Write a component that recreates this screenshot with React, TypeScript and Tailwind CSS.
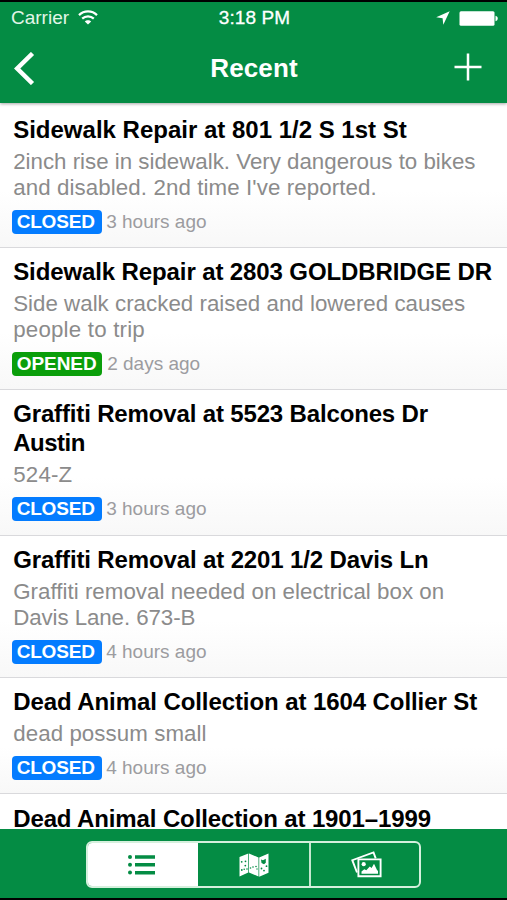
import React from "react";

type Line = { text: string; spacing: string };
type Report = {
  title: Line[];
  body: Line[];
  status: "CLOSED" | "OPENED";
  age: string;
};

const reports: Report[] = [
  {
    title: [{ text: "Sidewalk Repair at 801 1/2 S 1st St", spacing: "tracking-[0px]" }],
    body: [
      { text: "2inch rise in sidewalk. Very dangerous to bikes", spacing: "tracking-[0px]" },
      { text: "and disabled. 2nd time I've reported.", spacing: "tracking-[0.1px]" },
    ],
    status: "CLOSED",
    age: "3 hours ago",
  },
  {
    title: [{ text: "Sidewalk Repair at 2803 GOLDBRIDGE DR", spacing: "tracking-[-0.11px]" }],
    body: [
      { text: "Side walk cracked raised and lowered causes", spacing: "tracking-[0.02px]" },
      { text: "people to trip", spacing: "tracking-[0.2px]" },
    ],
    status: "OPENED",
    age: "2 days ago",
  },
  {
    title: [
      { text: "Graffiti Removal at 5523 Balcones Dr", spacing: "tracking-[-0.15px]" },
      { text: "Austin", spacing: "tracking-[-0.5px]" },
    ],
    body: [{ text: "524-Z", spacing: "tracking-[0.2px]" }],
    status: "CLOSED",
    age: "3 hours ago",
  },
  {
    title: [{ text: "Graffiti Removal at 2201 1/2 Davis Ln", spacing: "tracking-[-0.13px]" }],
    body: [
      { text: "Graffiti removal needed on electrical box on", spacing: "tracking-[0.03px]" },
      { text: "Davis Lane. 673-B", spacing: "tracking-[-0.08px]" },
    ],
    status: "CLOSED",
    age: "4 hours ago",
  },
  {
    title: [{ text: "Dead Animal Collection at 1604 Collier St", spacing: "tracking-[-0.08px]" }],
    body: [{ text: "dead possum small", spacing: "tracking-[0.08px]" }],
    status: "CLOSED",
    age: "4 hours ago",
  },
];

function Row({ report }: { report: Report }) {
  return (
    <li className="shrink-0 whitespace-nowrap border-b border-[#d9d9dc] bg-linear-to-b from-white from-60% to-[#f8f8f8] pt-[9px] pr-2 pb-[13.2px] pl-[13.2px]">
      <h2 className="text-[24px] leading-[29px] font-bold text-black">
        {report.title.map((line) => (
          <span key={line.text} className={`block ${line.spacing}`}>{line.text}</span>
        ))}
      </h2>
      <p className="mt-[5px] text-[22.3px] leading-[26px] text-[#8b8b8b]">
        {report.body.map((line) => (
          <span key={line.text} className={`block ${line.spacing}`}>{line.text}</span>
        ))}
      </p>
      <div className="mt-[9px] -ml-px flex h-6 items-center">
        <span
          className={`flex h-6 w-[90px] items-center rounded-[4px] pl-[4.5px] text-[19px] leading-6 font-bold text-white ${
            report.status === "CLOSED" ? "bg-[#047cff] tracking-[-0.2px]" : "bg-[#0a9e0a] tracking-[-0.05px]"
          }`}
        >
          {report.status}
        </span>
        <span
          className={`text-[19px] leading-6 text-[#9c9ca0] ${report.status === "CLOSED" ? "ml-1" : "ml-[5px]"}`}
        >
          {report.age}
        </span>
      </div>
    </li>
  );
}

function WifiIcon() {
  return (
    <svg className="mb-0.5 ml-[9px] h-[15px] w-5" viewBox="0 0 20 15" fill="none" stroke="white" strokeWidth="2.2">
      <path d="M1 5.1C6 .1 14 .1 19 5.1" />
      <path d="M4.2 8.6c3.3-3.1 8.3-3.1 11.6 0" />
      <path d="M10 14.5 6.8 11.6c1.6-1.9 4.8-1.9 6.4 0Z" fill="white" stroke="none" />
    </svg>
  );
}

function ListIcon() {
  return (
    <svg className="mr-[3px] h-5 w-7" viewBox="0 0 28 20" fill="#048c44">
      <circle cx="2" cy="2" r="2" />
      <circle cx="2" cy="9.8" r="2" />
      <circle cx="2" cy="17.6" r="2" />
      <path d="M7 .3h20v3.5H7zM7 8.1h20v3.5H7zM7 15.9h20v3.5H7z" />
    </svg>
  );
}

function MapIcon() {
  return (
    <svg className="h-6 w-[30px]" viewBox="0 0 30 24">
      <path d="M.5 4 9.3.5v19L.5 23.5zM10 .5l9.5 4v19l-9.5-4zM20.2 4.5l9.3-4v19.2l-9.3 4z" fill="white" />
      <g fill="#048c44">
        <circle cx="2.7" cy="8.8" r=".9" />
        <circle cx="6.5" cy="8.3" r=".9" />
        <circle cx="6.3" cy="12.6" r=".9" />
        <circle cx="2.8" cy="17" r=".9" />
        <circle cx="5.2" cy="16.3" r=".8" />
        <circle cx="8" cy="16" r=".8" />
        <circle cx="11.5" cy="15" r=".8" />
        <circle cx="14" cy="14" r=".8" />
        <circle cx="17" cy="13.5" r=".8" />
        <circle cx="18" cy="16" r=".7" />
        <circle cx="22.5" cy="15.5" r=".9" />
        <circle cx="25" cy="17.6" r=".9" />
        <circle cx="27.5" cy="13.2" r=".9" />
        <path d="m22 6.4 2 .8 2.8-1.5v4L25 11.2 22.5 10z" />
      </g>
    </svg>
  );
}

function PhotosIcon() {
  return (
    <svg className="ml-[3px] h-[27px] w-[31px]" viewBox="0 0 31 27" fill="none" stroke="white" strokeWidth="1.9">
      <path d="M6 21.5 1.3 9.2 22.5 1.4l2.2 6" />
      <path d="M7.4 8.4h22.2v16.8H7.4z" fill="#048c44" />
      <path d="M10.5 22.8v-2.4l2.8-2.2 2 1 3.5-3.6 1.8 1.4 2.4-4.2 3 6.3 1 .8v2.9z" fill="white" stroke="none" />
      <circle cx="12.7" cy="13.2" r="2.1" fill="white" stroke="none" />
    </svg>
  );
}

export default function App() {
  return (
    <div className="flex h-[900px] w-[507px] flex-col overflow-hidden border-t-2 border-b-2 border-black bg-white font-['Liberation_Sans',Arial,sans-serif]">
      <header className="z-10 h-[101px] shrink-0 bg-[#048c44] text-white shadow-[0_1px_3px_rgba(0,0,0,0.35)]">
        <div className="grid h-[33px] grid-cols-3 items-center pr-[9px] pl-[11px] text-[19px]">
          <div className="flex items-center">
            <span className="text-[#e2f6e8]">Carrier</span>
            <WifiIcon />
          </div>
          <div className="text-center tracking-[0.1px] [-webkit-text-stroke:0.3px_white]">3:18 PM</div>
          <div className="mb-px flex items-center justify-end">
            <svg className="h-[14px] w-[14px]" viewBox="0 0 14 14" fill="white">
              <path d="M13.7.2 7.3 13.8 6.6 7.2.2 6.3z" />
            </svg>
            <svg className="ml-[9px] h-[15px] w-[39px]" viewBox="0 0 39 15" fill="white">
              <rect x=".5" y=".2" width="35" height="14.6" rx="1.5" />
              <path d="M36.5 4.8c3 .7 3 4.7 0 5.4z" />
            </svg>
          </div>
        </div>
        <div className="grid h-[67px] grid-cols-3 items-center pr-[25px] pl-[14px]">
          <svg className="h-[33px] w-[21px]" viewBox="0 0 21 33" fill="none" stroke="white" strokeWidth="4.5">
            <path d="M18.5 1.5 3.2 16.5l15.3 15" />
          </svg>
          <h1 className="ml-[12px] text-center text-[26px] font-bold tracking-[0.1px]">Recent</h1>
          <svg className="mb-[3px] h-7 w-7 justify-self-end" viewBox="0 0 28 28" fill="none" stroke="white" strokeWidth="2.5">
            <path d="M14 .5v27M.5 14h27" />
          </svg>
        </div>
      </header>
      <main className="min-h-0 flex-1 overflow-hidden pt-[3px]">
        <ul className="flex flex-col">
          {reports.map((report) => (
            <Row key={report.title[0].text} report={report} />
          ))}
          <li className="pt-2.5 pl-[13.2px] text-[24px] leading-[29px] font-bold tracking-[-0.12px] whitespace-nowrap">
            Dead Animal Collection at 1901–1999
          </li>
        </ul>
      </main>
      <nav className="flex h-[69px] shrink-0 items-center justify-center bg-[#048c44] pt-0.5">
        <div className="flex h-[47px] w-[335px] overflow-hidden rounded-md border-2 border-[#d5f0dd]">
          <div className="flex w-[110px] items-center justify-center bg-white"><ListIcon /></div>
          <div className="flex w-[113px] items-center justify-center border-r-2 border-[#c5e8d0]"><MapIcon /></div>
          <div className="flex flex-1 items-center justify-center"><PhotosIcon /></div>
        </div>
      </nav>
    </div>
  );
}
